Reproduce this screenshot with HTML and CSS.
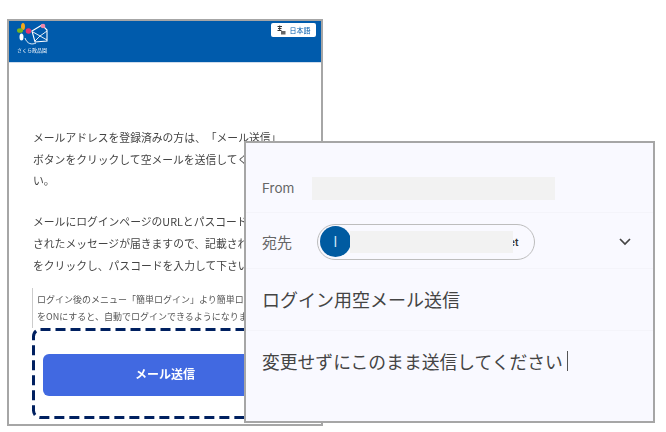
FILE: index.html
```html
<!DOCTYPE html>
<html lang="ja">
<head>
  <meta charset="UTF-8" />
  <title>ログイン用空メール送信</title>
  <link rel="stylesheet" href="styles.css">
</head>
<body>
  <div class="stage">
    <div class="phone">
      <header class="phone-head">
        <div class="logo">
          <svg class="logo-mark" width="31" height="24" viewBox="0 0 31 24">
            <ellipse cx="6" cy="3.5" rx="2" ry="3.5" fill="#f2a81d"/>
            <ellipse cx="3" cy="7.5" rx="3" ry="2.3" fill="#7ab51d"/>
            <circle cx="11.5" cy="8" r="2.8" fill="#e8336d"/>
            <ellipse cx="4.5" cy="14" rx="2" ry="3.5" fill="#fff"/>
            <path d="M15 8 L25 2 L30 7 L30 18 L18 19 Z" fill="none" stroke="#fff" stroke-width="1.1"/>
            <path d="M16 9 L23 13 L30 8 M18 18 L23 13 L30 17" fill="none" stroke="#fff" stroke-width=".9"/>
            <circle cx="26" cy="3" r="2.3" fill="#ee86a8"/>
            <path d="M8 15 C10 21 15 22 19 20" fill="none" stroke="#fff" stroke-width=".9"/>
          </svg>
          <span class="logo-name">さくら政品園</span>
        </div>
        <button class="lang">
          <svg width="9" height="10" viewBox="0 0 9 10">
            <path d="M0.5 1.5H5M2.7 0.5V5M1 3.5H4.5M0.5 5.5H4.5" fill="none" stroke="#333" stroke-width="1"/>
            <rect x="4" y="6" width="4.5" height="3.5" fill="#666"/>
          </svg>
          <span>日本語</span>
        </button>
      </header>
      <div class="phone-body">
        <p class="para">メールアドレスを登録済みの方は、「メール送信」ボタンをクリックして空メールを送信してください。</p>
        <p class="para">メールにログインページのURLとパスコードが記載されたメッセージが届きますので、記載されたURLをクリックし、パスコードを入力して下さい。</p>
        <p class="note">ログイン後のメニュー「簡単ログイン」より簡単ログイン<br>をONにすると、自動でログインできるようになります。</p>
        <div class="send-box">
          <svg class="send-dash" width="266" height="91" viewBox="0 0 266 91">
            <rect x="1.5" y="1.5" width="263" height="88" rx="7" fill="none" stroke="#002060" stroke-width="3" stroke-dasharray="10 5"/>
          </svg>
          <button class="send-btn">メール送信</button>
        </div>
      </div>
    </div>

    <div class="mail">
      <div class="mail-row from-row">
        <span class="label">From</span>
        <span class="masked from-mask"></span>
      </div>
      <div class="mail-row to-row">
        <span class="label to-label">宛先</span>
        <div class="pill">
          <span class="avatar">I</span>
          <span class="masked pill-mask"></span>
          <span class="pill-tail">et</span>
        </div>
        <svg class="chevron" width="14" height="9" viewBox="0 0 14 9">
          <path d="M2 2 L7 7 L12 2" fill="none" stroke="#444" stroke-width="1.7"/>
        </svg>
      </div>
      <div class="mail-row subject-row">ログイン用空メール送信</div>
      <div class="mail-body">変更せずにこのまま送信してください<span class="caret"></span></div>
    </div>
  </div>
</body>
</html>
```

FILE: styles.css
```css
* {
  box-sizing: border-box;
}

body {
  margin: 0;
  background-color: #fff;
  font-family: "Noto Sans CJK JP", "Noto Sans", sans-serif;
  text-spacing-trim: space-all;
}

.stage {
  position: relative;
  width: 666px;
  height: 432px;
  padding: 19px 0 0 7px;
  overflow: hidden;
}

.phone {
  width: 316px;
  height: 407px;
  border: 2px solid #a6a6a6;
  background-color: #fff;
  overflow: hidden;
}

.phone-head {
  display: flex;
  justify-content: space-between;
  align-items: flex-start;
  height: 42px;
  padding: 2px 5px 0 8px;
  background-color: #005bac;
  border-bottom: 1px solid #cfdcec;
  filter: blur(.3px);
}

.logo {
  display: flex;
  flex-direction: column;
  width: 31px;
}

.logo-mark {
  display: block;
}

.logo-name {
  margin-top: -1px;
  font-size: 5px;
  line-height: 7px;
  color: #fff;
  white-space: nowrap;
}

.lang {
  display: flex;
  align-items: center;
  justify-content: center;
  gap: 4px;
  width: 45px;
  height: 14px;
  padding: 0;
  border: 0;
  border-radius: 2px;
  background-color: #fff;
  color: #005bac;
  font-family: inherit;
  font-size: 7px;
}

.phone-body {
  padding: 64px 0 0 24px;
  filter: blur(.35px);
}

.para {
  width: 252px;
  margin: 0;
  font-size: 10.8px;
  line-height: 21.6px;
  color: #444;
}

.para + .para {
  margin-top: 19.6px;
}

.note {
  width: 268px;
  height: 40px;
  margin: 12px 0 0 -1px;
  padding: 3px 0 0 4px;
  border-left: 1px solid #ccc;
  font-size: 9px;
  line-height: 17px;
  color: #555;
  white-space: nowrap;
}

.send-box {
  position: relative;
  width: 266px;
  height: 91px;
  margin-left: -1px;
  padding: 26px 11px 0;
}

.send-dash {
  position: absolute;
  top: 0;
  left: 0;
}

.send-btn {
  display: block;
  width: 100%;
  height: 42px;
  padding: 0 0 3px;
  border: 0;
  border-radius: 6px;
  background-color: #4169e1;
  color: #fff;
  font-family: inherit;
  font-size: 12px;
  font-weight: 700;
}

.mail {
  position: absolute;
  left: 244px;
  top: 141px;
  width: 411px;
  height: 282px;
  border: 2px solid #a6a6a6;
  background-color: #f9f9ff;
  color: #444;
}

.mail-row {
  display: flex;
  align-items: center;
  padding-left: 16px;
  border-bottom: 1px solid #f4f4fa;
}

.from-row {
  height: 70px;
  padding-top: 21px;
}

.to-row {
  height: 56px;
  padding-top: 2px;
}

.subject-row {
  height: 62px;
  padding-bottom: 1px;
  font-size: 18px;
  color: #444;
}

.label {
  width: 50px;
  font-family: Inter, "Noto Sans CJK JP", sans-serif;
  font-size: 13.5px;
  color: #666;
}

.to-label {
  width: 55px;
  font-family: "Noto Sans CJK JP", sans-serif;
  font-size: 15px;
}

.masked {
  display: block;
  background-color: #f2f2f2;
}

.from-mask {
  width: 243px;
  height: 23px;
}

.pill {
  display: flex;
  align-items: center;
  width: 218px;
  height: 36px;
  padding-left: 2px;
  border: 1px solid #bdbdbd;
  border-radius: 18px;
  background-color: #f9f9ff;
}

.avatar {
  flex: none;
  width: 31px;
  height: 31px;
  border-radius: 50%;
  background-color: #005ba1;
  color: #cfe6f7;
  font-family: Inter, sans-serif;
  font-size: 14px;
  line-height: 31px;
  text-align: center;
}

.pill-mask {
  position: relative;
  z-index: 1;
  flex: none;
  width: 163px;
  height: 22px;
  margin-left: -1px;
}

.pill-tail {
  margin-left: -4px;
  font-family: Inter, sans-serif;
  font-size: 10px;
  font-weight: 600;
  color: #333;
}

.chevron {
  margin-left: 83px;
}

.mail-body {
  display: flex;
  align-items: center;
  padding: 20px 0 0 16px;
  font-size: 17.8px;
  line-height: 20px;
  color: #444;
}

.caret {
  width: 1.5px;
  height: 20px;
  margin-left: 4px;
  background-color: #555;
}
```
